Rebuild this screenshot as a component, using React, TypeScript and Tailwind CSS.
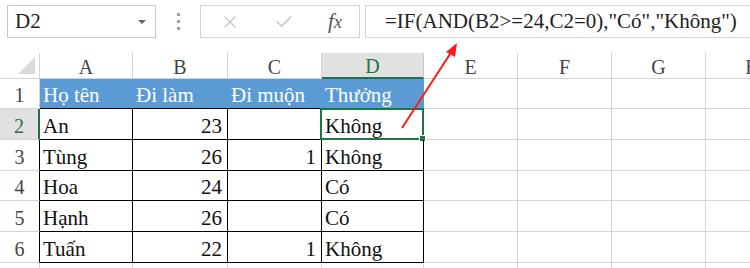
import { X, Check } from 'lucide-react';

const ff = "font-['Liberation_Serif',serif]";

const cols = ['A', 'B', 'C', 'D', 'E', 'F', 'G', 'H'];

const rows = [
  ['Họ tên', 'Đi làm', 'Đi muộn', 'Thưởng'],
  ['An', '23', '', 'Không'],
  ['Tùng', '26', '1', 'Không'],
  ['Hoa', '24', '', 'Có'],
  ['Hạnh', '26', '', 'Có'],
  ['Tuấn', '22', '1', 'Không'],
];

const rowHeights = ['h-[30px]', 'h-[31px]', 'h-[31px]', 'h-[30px]', 'h-[31px]', 'h-[31px]'];

const gridCols = 'grid grid-cols-[40px_93px_95px_94px_102px_94px_94px_94px_94px] w-[854px]';

const Toolbar = () => (
  <div className="flex items-start pt-[5px] pl-[7px] h-[48px]">
    {/* name box */}
    <div className="w-[149px] h-[33px] border border-[#c6c6c6] flex items-center justify-between pl-[7px] pr-[9px]">
      <span className={`${ff} text-[21px] text-[#222] leading-none`}>D2</span>
      <div className="w-0 h-0 border-l-[4px] border-r-[4px] border-t-[4px] border-l-transparent border-r-transparent border-t-[#666]" />
    </div>
    {/* grip dots */}
    <div className="w-[44px] h-[33px] flex flex-col items-center justify-center gap-[4px]">
      <div className="w-[3px] h-[3px] bg-[#a0a0a0]" />
      <div className="w-[3px] h-[3px] bg-[#a0a0a0]" />
      <div className="w-[3px] h-[3px] bg-[#a0a0a0]" />
    </div>
    {/* buttons */}
    <div className="w-[160px] h-[33px] border border-[#d4d4d4] flex items-center">
      <div className="w-[55px] flex justify-center pl-[2px]">
        <X size={20} strokeWidth={1.4} color="#c2c2c2" />
      </div>
      <div className="w-[55px] flex justify-center">
        <Check size={20} strokeWidth={1.6} color="#c2c2c2" />
      </div>
      <div className="w-[48px] flex justify-center">
        <span className={`${ff} italic text-[21px] text-[#555] leading-none`}>
          f<span className={`${ff} text-[18px]`}>x</span>
        </span>
      </div>
    </div>
    {/* formula */}
    <div className="ml-[5px] flex-1 h-[33px] border-t border-b border-l border-[#d4d4d4] flex items-center pl-[19px] whitespace-nowrap overflow-hidden">
      <span className={`${ff} text-[21px] text-[#222] leading-none`}>=IF(AND(B2&gt;=24,C2=0),"Có","Không")</span>
    </div>
  </div>
);

const ColHeader = () => (
  <div className={`${gridCols} h-[26px]`}>
    <div className="border-r border-b border-[#d4d4d4] relative">
      <div className="absolute right-[4px] bottom-[4px] w-0 h-0 border-l-[17px] border-l-transparent border-b-[17px] border-b-[#dadada]" />
    </div>
    {cols.map((c) =>
      c === 'D' ? (
        <div key={c} className={`${ff} bg-[#e1e1e1] border-r border-[#c8c8c8] border-b-2 border-b-[#217346] flex items-end justify-center text-[#217346] text-[20px] leading-[22px]`}>
          {c}
        </div>
      ) : (
        <div key={c} className={`${ff} border-r border-b border-[#d4d4d4] flex items-end justify-center text-[#444] text-[20px] leading-[22px]`}>
          {c}
        </div>
      )
    )}
  </div>
);

const DataRow = ({ idx, cells }: { idx: number; cells: string[] }) => {
  const isHead = idx === 0;
  const selected = idx === 1;
  const h = rowHeights[idx];
  return (
    <div className={`${gridCols} ${h}`}>
      {selected ? (
        <div className={`${ff} bg-[#e1e1e1] border-r-2 border-r-[#217346] border-b border-b-[#d4d4d4] flex items-end justify-center text-[#217346] text-[20px] leading-[25px]`}>
          {idx + 1}
        </div>
      ) : isHead ? (
        <div className={`${ff} border-r border-b border-[#d4d4d4] flex items-end justify-center text-[#444] text-[20px] leading-[25px]`}>
          {idx + 1}
        </div>
      ) : (
        <div className={`${ff} border-r border-r-black border-b border-b-[#d4d4d4] flex items-end justify-center text-[#444] text-[20px] leading-[25px]`}>
          {idx + 1}
        </div>
      )}
      {cells.map((v, i) => {
        const right = i === 1 || i === 2;
        if (isHead) {
          return (
            <div key={i} className={`${ff} bg-[#5b9bd5] border-b border-b-black flex items-end pl-[3px] text-white text-[21px] leading-[25px] whitespace-nowrap`}>
              {v}
            </div>
          );
        }
        return (
          <div
            key={i}
            className={
              right
                ? `${ff} border-r border-b border-black flex items-end justify-end pr-[5px] text-[#111] text-[21px] leading-[25px]`
                : `${ff} relative border-r border-b border-black flex items-end pl-[3px] text-[#111] text-[21px] leading-[25px]`
            }
          >
            {v}
            {selected && i === 3 && (
              <div className="absolute -left-[2px] -top-[1px] -right-[1px] -bottom-[1px] border-2 border-[#217346]">
                <div className="absolute -right-[4px] -bottom-[4px] w-[7px] h-[7px] bg-[#217346] border border-white" />
              </div>
            )}
          </div>
        );
      })}
      <div className="border-r border-b border-[#d4d4d4]" />
      <div className="border-r border-b border-[#d4d4d4]" />
      <div className="border-r border-b border-[#d4d4d4]" />
      <div className="border-r border-b border-[#d4d4d4]" />
    </div>
  );
};

export default function App() {
  return (
    <div className={`${ff} relative w-[750px] h-[268px] overflow-hidden bg-white`}>
      <Toolbar />
      <div className="mt-[5px]">
        <ColHeader />
        {rows.map((r, i) => (
          <DataRow key={i} idx={i} cells={r} />
        ))}
        <div className={`${gridCols} h-[10px]`}>
          <div className="border-r border-[#d4d4d4]" />
          <div className="border-r border-[#d4d4d4]" />
          <div className="border-r border-[#d4d4d4]" />
          <div className="border-r border-[#d4d4d4]" />
          <div className="border-r border-[#d4d4d4]" />
          <div className="border-r border-[#d4d4d4]" />
          <div className="border-r border-[#d4d4d4]" />
          <div className="border-r border-[#d4d4d4]" />
          <div className="border-r border-[#d4d4d4]" />
        </div>
      </div>
      {/* annotation arrow */}
      <svg className="absolute left-0 top-0 pointer-events-none" width="750" height="268">
        <line x1="402" y1="128" x2="452" y2="51" stroke="#ff1a1a" strokeWidth="2" />
        <polygon points="457,43 446,52 455,57" fill="#ff1a1a" />
      </svg>
    </div>
  );
}
